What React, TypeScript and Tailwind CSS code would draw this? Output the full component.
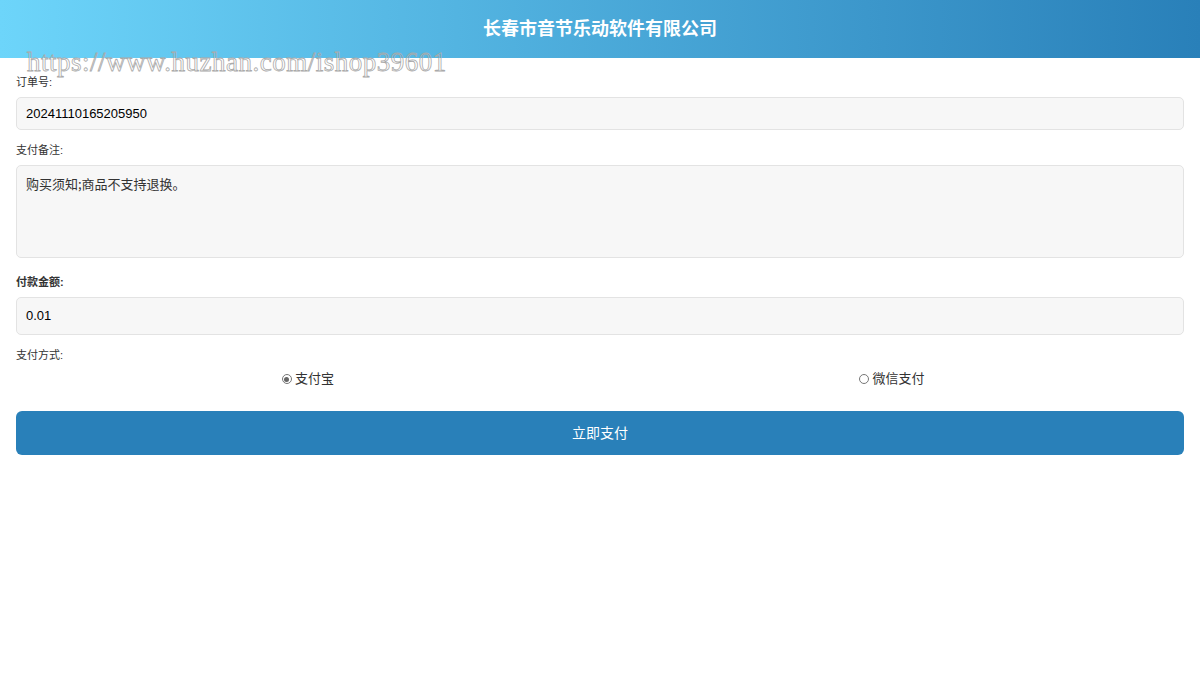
export default function App() {
  const f = { fontFamily: '"Liberation Sans", Arial, "Noto Sans CJK SC", sans-serif' };
  return (
    <div className="relative min-h-[675px] bg-white text-[#333]" style={f}>
      <div className="h-[58px] flex items-center justify-center bg-gradient-to-r from-[#6dd5fa] to-[#2980b9]">
        <h1 className="text-white font-bold text-[18px]">长春市音节乐动软件有限公司</h1>
      </div>
      <div
        className="absolute left-[27px] top-[42px] text-[27px] text-transparent tracking-[0.5px] pointer-events-none"
        style={{ fontFamily: '"Liberation Serif", "DejaVu Serif", serif', WebkitTextStroke: '0.8px #aaa' }}
      >
        https://www.huzhan.com/ishop39601
      </div>
      <div className="px-4 pt-[17px] flex flex-col">
        <label className="text-[11px] text-[#333] h-[15px] leading-[15px]">订单号:</label>
        <div className="mt-[7px] h-[33px] rounded-[5px] border border-[#e3e3e3] bg-[#f7f7f7] flex items-center px-[9px] text-[13px] text-black">20241110165205950</div>
        <label className="mt-[13px] text-[11px] h-[15px] leading-[15px]">支付备注:</label>
        <div className="mt-[7px] h-[93px] rounded-[5px] border border-[#e3e3e3] bg-[#f7f7f7] px-[9px] pt-[8px] text-[13px] text-[#333]" style={{ fontFamily: '"Noto Sans CJK SC", serif' }}>购买须知;商品不支持退换。</div>
        <label className="mt-[17px] text-[11px] font-bold h-[15px] leading-[15px]">付款金额:</label>
        <div className="mt-[7px] h-[38px] rounded-[5px] border border-[#e3e3e3] bg-[#f7f7f7] flex items-center px-[9px] text-[13px] text-black">0.01</div>
        <label className="mt-[13px] text-[11px] h-[15px] leading-[15px]">支付方式:</label>
        <div className="flex mt-[8px] h-[16px] items-center text-[13px] text-[#333]">
          <div className="flex-1 flex justify-center items-center gap-[3px]">
            <span className="w-[10px] h-[10px] rounded-full border border-[#777] flex items-center justify-center"><span className="w-[5px] h-[5px] rounded-full bg-[#666]" /></span>
            支付宝
          </div>
          <div className="flex-1 flex justify-center items-center gap-[3px]">
            <span className="w-[10px] h-[10px] rounded-full border border-[#777]" />
            微信支付
          </div>
        </div>
        <button className="mt-[24px] h-[44px] rounded-[6px] bg-[#2980b9] text-white text-[14px]">立即支付</button>
      </div>
    </div>
  );
}
